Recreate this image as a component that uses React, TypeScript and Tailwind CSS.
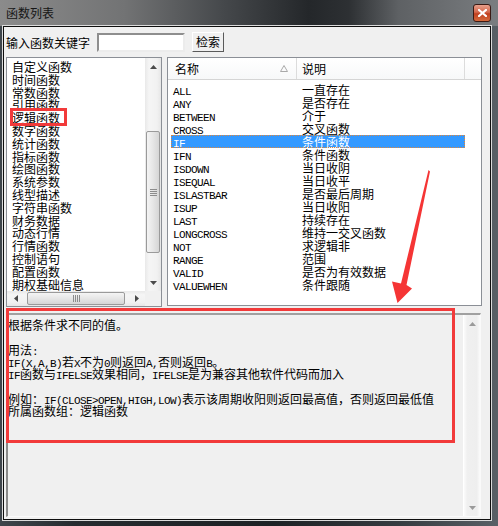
import React from 'react';

const MONO = "font-['Liberation_Mono',monospace] text-[11px] tracking-[-0.6px]";

// ascii runs rendered narrow, like the SimSun half-width glyphs
const Mixed = ({ s }: { s: string }) => (
  <>
    {s.split(/([\x20-\x7e]+)/).map((p, i) =>
      /[\x21-\x7e]/.test(p) ? (
        <span key={i} className={`${MONO} leading-none`}>
          {p}
        </span>
      ) : (
        <React.Fragment key={i}>{p}</React.Fragment>
      ),
    )}
  </>
);

const Tri = ({ dir, color = '#4a4a4a' }: { dir: 'up' | 'down' | 'left' | 'right'; color?: string }) => {
  const vert = dir === 'up' || dir === 'down';
  const pts = {
    up: '0,4 7,4 3.5,0',
    down: '0,0 7,0 3.5,4',
    left: '4,0 4,7 0,3.5',
    right: '0,0 0,7 4,3.5',
  }[dir];
  return (
    <svg width={vert ? 7 : 4} height={vert ? 4 : 7} viewBox={vert ? '0 0 7 4' : '0 0 4 7'}>
      <polygon points={pts} fill={color} />
    </svg>
  );
};

const groups = [
  '自定义函数', '时间函数', '常数函数', '引用函数', '逻辑函数', '数字函数', '统计函数', '指标函数', '绘图函数',
  '系统参数', '线型描述', '字符串函数', '财务数据', '动态行情', '行情函数', '控制语句', '配置函数', '期权基础信息',
];

const funcs: [string, string][] = [
  ['ALL', '一直存在'],
  ['ANY', '是否存在'],
  ['BETWEEN', '介于'],
  ['CROSS', '交叉函数'],
  ['IF', '条件函数'],
  ['IFN', '条件函数'],
  ['ISDOWN', '当日收阴'],
  ['ISEQUAL', '当日收平'],
  ['ISLASTBAR', '是否最后周期'],
  ['ISUP', '当日收阳'],
  ['LAST', '持续存在'],
  ['LONGCROSS', '维持一交叉函数'],
  ['NOT', '求逻辑非'],
  ['RANGE', '范围'],
  ['VALID', '是否为有效数据'],
  ['VALUEWHEN', '条件跟随'],
];

const help = [
  '根据条件求不同的值。',
  '',
  '用法:',
  'IF(X,A,B)若X不为0则返回A,否则返回B。',
  'IF函数与IFELSE效果相同，IFELSE是为兼容其他软件代码而加入',
  '',
  '例如：IF(CLOSE>OPEN,HIGH,LOW)表示该周期收阳则返回最高值，否则返回最低值',
  '所属函数组：逻辑函数',
];

const VScroll = () => (
  <div className="flex flex-col bg-[linear-gradient(90deg,#e9e9e9,#f5f5f5_25%,#f1f1f1_75%,#e6e6e6)]">
    <div className="h-[17px] flex items-center justify-center">
      <Tri dir="up" />
    </div>
    <div className="h-[56px]" />
    <div className="h-[122px] mx-[1px] rounded-[2px] border border-[#9a9a9a] bg-[linear-gradient(90deg,#f4f4f4,#e6e6e6_50%,#d5d5d5)] flex items-center justify-center">
      <div className="flex flex-col gap-[1px] w-[7px]">
        <div className="h-px bg-[#8c8c8c]" />
        <div className="h-px bg-[#8c8c8c]" />
        <div className="h-px bg-[#8c8c8c]" />
        <div className="h-px bg-[#8c8c8c]" />
      </div>
    </div>
    <div className="flex-1" />
    <div className="h-[17px] flex items-center justify-center">
      <Tri dir="down" />
    </div>
  </div>
);

const HScroll = () => (
  <div className="flex bg-[linear-gradient(180deg,#e9e9e9,#f5f5f5_25%,#f1f1f1_75%,#e6e6e6)]">
    <div className="w-[17px] flex items-center justify-center">
      <Tri dir="left" />
    </div>
    <div className="w-[3px]" />
    <div className="w-[98px] my-[1px] rounded-[2px] border border-[#9a9a9a] bg-[linear-gradient(180deg,#f4f4f4,#e6e6e6_50%,#d5d5d5)] flex items-center justify-center">
      <div className="flex gap-[1px] h-[7px]">
        <div className="w-px bg-[#8c8c8c]" />
        <div className="w-px bg-[#8c8c8c]" />
        <div className="w-px bg-[#8c8c8c]" />
        <div className="w-px bg-[#8c8c8c]" />
      </div>
    </div>
    <div className="flex-1" />
    <div className="w-[17px] flex items-center justify-center">
      <Tri dir="right" />
    </div>
  </div>
);

export default function App() {
  return (
    <div className="relative w-[498px] h-[526px] flex flex-col overflow-hidden bg-[linear-gradient(90deg,#3f464c_0%,#262b2f_15%,#1d2124_55%,#363b40_80%,#596066_100%)] font-['Noto_Sans_CJK_SC',sans-serif] text-[12px] text-black">
      {/* title bar */}
      <div className="h-[26px] shrink-0 flex items-center justify-between pl-[6px] pr-[7px] bg-[linear-gradient(90deg,#8b8b8b_0%,#727374_25%,#45484b_45%,#24272a_62%,#2d3033_70%,#5e6164_80%,#7a7d80_100%)]">
        <span className="text-[12px] leading-none text-[#151515]">函数列表</span>
        <div className="w-[18px] h-[18px] rounded-[3px] border border-[#3b1a14] bg-[linear-gradient(180deg,#e8a08c_0%,#d4674c_45%,#c0401f_55%,#d56a3c_100%)] flex items-center justify-center">
          <svg width="9" height="8" viewBox="0 0 9 8">
            <path d="M1 1 L8 7 M8 1 L1 7" stroke="#fff" strokeWidth="2.2" strokeLinecap="square" />
          </svg>
        </div>
      </div>

      {/* client area */}
      <div className="flex-1 ml-[3px] mr-[7px] mb-[6px] border border-[#0e0e0e] shadow-[0_0_0_1px_#dcdcdc] bg-[#f0f0f0] px-[2px] flex flex-col">
        {/* search row */}
        <div className="h-[30px] shrink-0 pt-[5px] flex items-start">
          <span className="h-[19px] leading-[19px] mt-[1px]">输入函数关键字</span>
          <div className="ml-[7px] mt-[1px] w-[88px] h-[19px] bg-white border-2 border-t-[#8e8e8e] border-l-[#8e8e8e] border-b-[#ececec] border-r-[#ececec]" />
          <div className="ml-[7px] w-[32px] h-[20px] border border-t-white border-l-white border-b-[#5a5a5a] border-r-[#5a5a5a] bg-[#f0f0f0] flex items-center justify-center leading-none">
            检索
          </div>
        </div>

        {/* lists */}
        <div className="h-[250px] shrink-0 flex items-start gap-[5px]">
          <div className="w-[156px] h-[250px] border border-[#8b8f96] bg-white grid grid-cols-[1fr_16px] grid-rows-[1fr_15px]">
            <div className="overflow-hidden pl-[5px] pt-[3px]">
              {groups.map((g) => (
                <div key={g} className="h-[12.8px] leading-[12.8px] whitespace-nowrap">
                  {g}
                </div>
              ))}
            </div>
            <VScroll />
            <HScroll />
            <div className="bg-[#f0f0f0]" />
          </div>

          <div className="w-[315px] h-[249px] border border-[#8b8f96] bg-white flex flex-col">
            <div className="h-[22px] shrink-0 flex border-b border-[#d5d5d5] bg-[linear-gradient(180deg,#ffffff,#f7f8f9)]">
              <div className="w-[129px] flex items-center justify-between pl-[7px] pr-[8px] border-r border-[#dcdcdc]">
                <span>名称</span>
                <svg width="8" height="7" viewBox="0 0 8 7">
                  <polygon points="4,0.5 7.5,6.5 0.5,6.5" fill="none" stroke="#a9a9a9" strokeWidth="1" />
                </svg>
              </div>
              <div className="w-[168px] flex items-center pl-[5px] border-r border-[#dcdcdc]">说明</div>
            </div>
            <div className="pt-[3px] pl-[3px]">
              {funcs.map(([n, d]) => {
                const sel = n === 'IF';
                return (
                  <div
                    key={n}
                    className={
                      sel
                        ? 'w-[294px] h-[13px] flex items-baseline bg-[#3399ff] text-white outline outline-1 outline-dotted outline-[#e0863a] -outline-offset-1'
                        : 'w-[294px] h-[13px] flex items-baseline'
                    }
                  >
                    <span className={`w-[126px] pl-[2px] ${MONO} leading-none`}>{n}</span>
                    <span className="pl-[5px] leading-[13px] whitespace-nowrap">{d}</span>
                  </div>
                );
              })}
            </div>
          </div>
        </div>

        {/* help text */}
        <div className="mt-[6px] w-[475px] h-[204px] shrink-0 flex border-t-2 border-l-2 border-t-[#a0a0a0] border-l-[#8a8a8a] border-r border-b border-r-[#fafafa] border-b-[#fafafa] bg-[#f0f0f0]">
          <div className="flex-1 pl-[0px] pt-[4px] leading-[12.3px] whitespace-nowrap">
            {help.map((l, i) => (
              <div key={i} className="h-[12.3px]">
                <Mixed s={l} />
              </div>
            ))}
          </div>
          <div className="w-[17px] flex flex-col justify-between border-l border-white bg-[linear-gradient(90deg,#fbfbfb,#f0f0f0_20%,#eeeeee_80%,#fbfbfb)]">
            <div className="h-[17px] flex items-center justify-center">
              <Tri dir="up" color="#9a9a9a" />
            </div>
            <div className="h-[17px] flex items-center justify-center">
              <Tri dir="down" color="#9a9a9a" />
            </div>
          </div>
        </div>
      </div>

      {/* annotations */}
      <div className="absolute left-[10px] top-[108px] w-[57px] h-[18px] border-[3px] border-[#f23a3a]" />
      <div className="absolute left-[6px] top-[308px] w-[449px] h-[135px] border-[3px] border-[#f23a3a]" />
      <svg className="absolute left-0 top-0 pointer-events-none" width="498" height="526" viewBox="0 0 498 526">
        <polygon
          points="428.5,170 430,171.5 406.5,285 412,288.5 397.5,303 392,281.5 401,283.5"
          fill="#f53535"
        />
      </svg>
    </div>
  );
}
